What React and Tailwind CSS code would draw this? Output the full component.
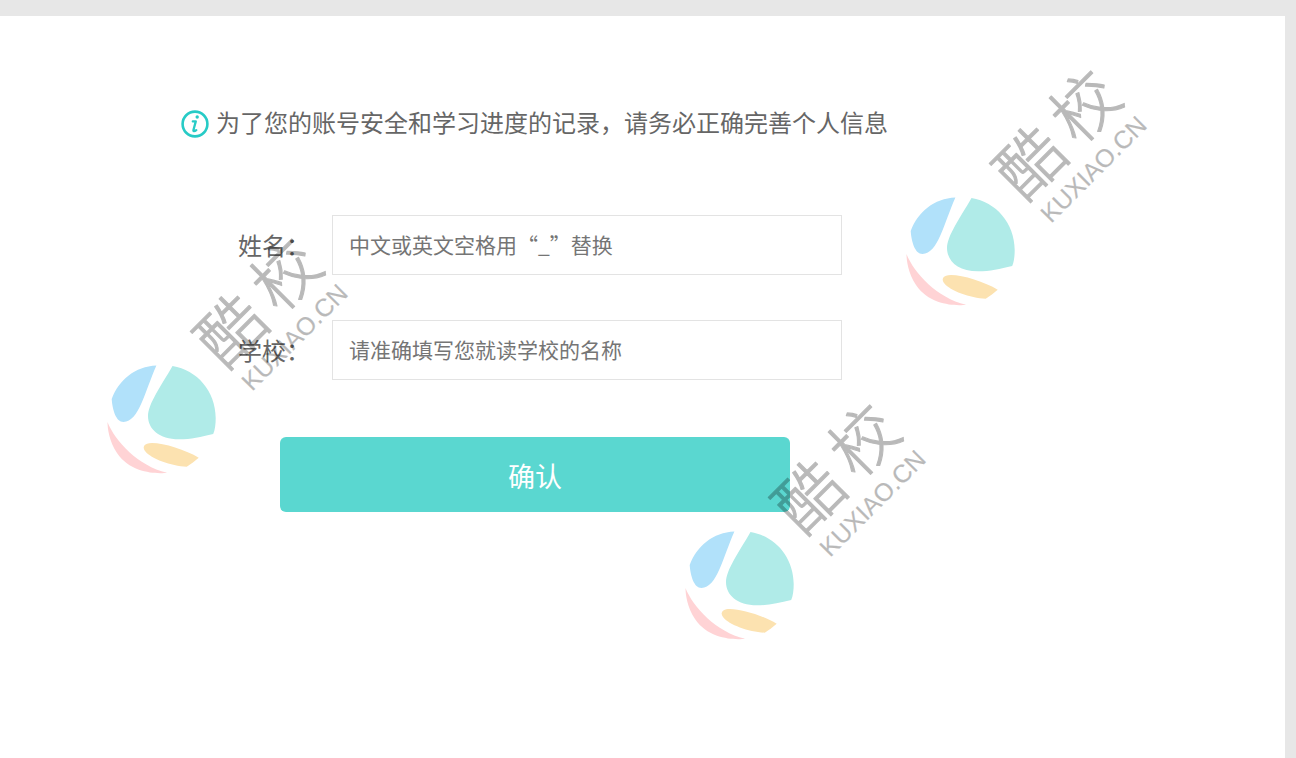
import { useState } from 'react'

const WATERMARKS = [
  { id: 'left', place: 'left-[101px] top-[182px]' },
  { id: 'bottom', place: 'left-[679px] top-[348px]' },
  { id: 'right', place: 'left-[900px] top-[14px]' }
]

const FIELDS = [
  { name: 'realname', label: '姓名：', placeholder: '中文或英文空格用“_”替换' },
  { name: 'school', label: '学校：', placeholder: '请准确填写您就读学校的名称' }
]

function InfoIcon() {
  return (
    <svg viewBox="0 0 28 28" className="w-7 h-7 shrink-0" fill="none" aria-hidden="true">
      <circle cx="14" cy="14" r="12.4" stroke="#27cbc6" strokeWidth="2.6" />
      <circle cx="16.2" cy="7" r="1.7" fill="#27cbc6" />
      <path
        d="M11.8 11.4h3l-2.3 8.4c-.4 1.6.8 1.9 2.8.3"
        stroke="#27cbc6"
        strokeWidth="2.3"
        strokeLinecap="round"
        strokeLinejoin="round"
      />
    </svg>
  )
}

function Watermark({ place }) {
  return (
    <svg
      viewBox="0 -30 270 290"
      className={`absolute w-[270px] h-[290px] pointer-events-none select-none ${place}`}
      aria-hidden="true"
    >
      <path fill="#b1e1fa" d="M55.4 137.6C34 138.5 18 152 10.7 171C11.5 182 15 194 22.5 194C38 194 44 163 55.4 137.6Z" />
      <path fill="#b0ebe8" d="M71.5 138C96 142 114.5 163 114.7 190C114.7 196 114 202 112.2 206C100 209 90 211.3 78 211.3C58 211.3 47 201 47 188C47 176 60 158 71.5 138Z" />
      <path fill="#ffd3d5" d="M6.5 194C14 213 37 238 66 244.7C58 246 30 246 16 225C8 213 6.5 200 6.5 194Z" />
      <path fill="#fce2b0" d="M97.7 229.7C85 222 63 215 51 215C43 215 41 219 44 223C50 231 70 238 85.7 238.7C90 236 94 233 97.7 229.7Z" />
      <g opacity="0.27" fill="#000" stroke="#000" strokeLinejoin="round">
        <g
          transform="translate(129 101) rotate(-45)"
          fontSize="66"
          strokeWidth="1.1"
          textAnchor="middle"
          className="font-light font-['Noto_Sans_CJK_SC',sans-serif]"
        >
          <text x="0" y="26">酷</text>
          <text x="78" y="25">校</text>
        </g>
        <text
          transform="translate(151 164) rotate(-45)"
          fontSize="25"
          strokeWidth="0.2"
          className="font-['Liberation_Sans',Arial,sans-serif]"
        >
          KUXIAO.CN
        </text>
      </g>
    </svg>
  )
}

export default function App() {
  const [values, setValues] = useState({ realname: '', school: '' })

  const handleChange = (e) => {
    const { name, value } = e.target
    setValues(prev => ({ ...prev, [name]: value }))
  }

  return (
    <div className="min-h-screen bg-[#e7e7e7] pt-4 pr-[11px] flex flex-col font-['Noto_Sans_CJK_SC',sans-serif] text-[#666]">
      <main className="relative flex-1 bg-white pt-[90px] pb-16">
        {/* Notice */}
        <div className="flex items-end gap-[7px] pl-[181px] pr-6">
          <InfoIcon />
          <h1 className="text-2xl leading-8">为了您的账号安全和学习进度的记录，请务必正确完善个人信息</h1>
        </div>

        {/* Profile form */}
        <form onSubmit={e => e.preventDefault()} className="pt-[77px] pl-[238px] pr-6">
          <div className="flex flex-col gap-[45px]">
            {FIELDS.map(field => (
              <div key={field.name} className="flex items-center">
                <label htmlFor={field.name} className="w-[94px] shrink-0 text-2xl whitespace-nowrap">
                  {field.label}
                </label>
                <input
                  id={field.name}
                  name={field.name}
                  type="text"
                  value={values[field.name]}
                  onChange={handleChange}
                  placeholder={field.placeholder}
                  className="w-full max-w-[510px] h-[60px] px-4 pb-0.5 border border-[#e3e3e3] bg-white text-[21px] placeholder:text-[#757575] focus:outline-none focus:border-[#5ad7d0]"
                />
              </div>
            ))}
          </div>
          <button
            type="submit"
            className="block w-full max-w-[510px] h-[75px] mt-[57px] ml-[42px] pt-1 rounded-md bg-[#5ad7d0] hover:bg-[#48cbc4] text-white text-[27px] cursor-pointer"
          >
            确认
          </button>
        </form>

        {WATERMARKS.map(mark => (
          <Watermark key={mark.id} place={mark.place} />
        ))}
      </main>
    </div>
  )
}
